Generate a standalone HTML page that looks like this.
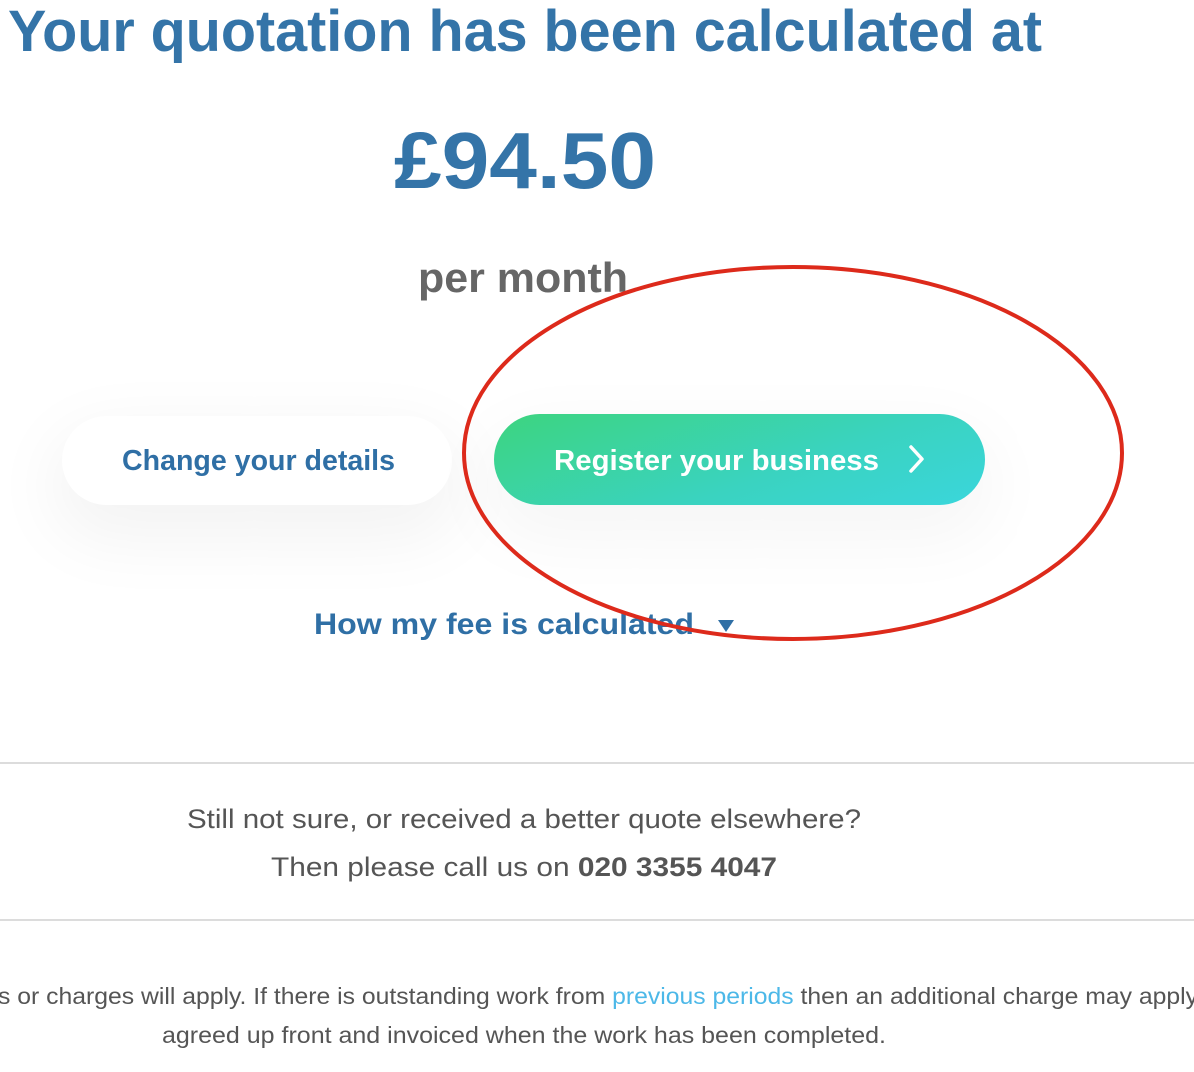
<!DOCTYPE html>
<html><head><meta charset="utf-8"><style>
html,body{margin:0;padding:0;background:#fff;width:1194px;height:1072px;overflow:hidden;font-family:"Liberation Sans",sans-serif}
.abs{position:absolute}
.btn{position:absolute;border-radius:46px}
.line{position:absolute;left:0;width:1194px;height:2px;background:#dcdcdc}
</style></head><body>
<div class="btn" style="left:62px;top:416px;width:390px;height:89px;background:#fff;box-shadow:0 25px 70px 10px rgba(0,0,0,0.05)"></div>
<div class="btn" style="left:494px;top:414px;width:491px;height:91px;background:linear-gradient(160deg,#3dd47f 0%,#3ad3c0 60%,#3ad6dc 100%);box-shadow:0 25px 70px 10px rgba(0,0,0,0.04)"></div>
<svg class="abs" style="left:0;top:0" width="1194" height="1072">
<g font-family="Liberation Sans, sans-serif" font-weight="bold">
<text x="8" y="51" font-size="58" fill="#3474a8" textLength="1034" lengthAdjust="spacingAndGlyphs">Your quotation has been calculated at</text>
<text x="394" y="188" font-size="80" fill="#3474a8" textLength="262" lengthAdjust="spacingAndGlyphs">£94.50</text>
<text x="418" y="292" font-size="42" fill="#666" textLength="210" lengthAdjust="spacingAndGlyphs">per month</text>
<text x="122" y="470" font-size="29" fill="#2f6fa5" textLength="273" lengthAdjust="spacingAndGlyphs">Change your details</text>
<text x="554" y="470" font-size="29" fill="#fff" textLength="325" lengthAdjust="spacingAndGlyphs">Register your business</text>
<text x="314" y="634" font-size="30" fill="#2f6fa5" textLength="380" lengthAdjust="spacingAndGlyphs">How my fee is calculated</text>
</g>
<path d="M911 447 L922 459 L911 471" stroke="#fff" stroke-width="3.5" fill="none" stroke-linecap="round" stroke-linejoin="round"/>
<path d="M718 620 L734 620 L726 632 Z" fill="#2f6fa5"/>
<g font-family="Liberation Sans, sans-serif" fill="#555">
<text x="187" y="828" font-size="27" textLength="674" lengthAdjust="spacingAndGlyphs">Still not sure, or received a better quote elsewhere?</text>
<text x="271" y="876" font-size="27" textLength="506" lengthAdjust="spacingAndGlyphs">Then please call us on <tspan font-weight="bold">020 3355 4047</tspan></text>
<text x="-2" y="1004" font-size="23" textLength="1200" lengthAdjust="spacingAndGlyphs">s or charges will apply. If there is outstanding work from <tspan fill="#4cb8e8">previous periods</tspan> then an additional charge may apply</text>
<text x="162" y="1043" font-size="23" textLength="724" lengthAdjust="spacingAndGlyphs">agreed up front and invoiced when the work has been completed.</text>
</g>
<ellipse cx="793" cy="453" rx="329" ry="186" fill="none" stroke="#dd2a1b" stroke-width="4"/>
</svg>
<div class="line" style="top:762px"></div>
<div class="line" style="top:919px"></div>
</body></html>
